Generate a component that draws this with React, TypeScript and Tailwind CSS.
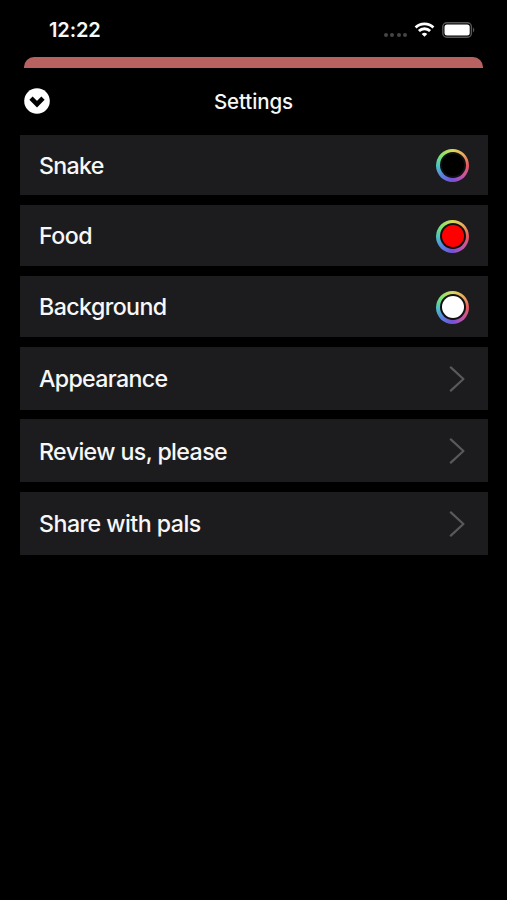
import { ReactNode } from "react";

type Row = {
  label: string;
  color?: string;
  spacing: string;
};

const colorRows: Row[] = [
  { label: "Snake", color: "bg-black", spacing: "tracking-[-0.7px]" },
  { label: "Food", color: "bg-[#fe0000]", spacing: "tracking-[-0.5px]" },
  { label: "Background", color: "bg-white", spacing: "tracking-[-0.58px]" },
];

const linkRows: Row[] = [
  { label: "Appearance", spacing: "tracking-[-0.67px]" },
  { label: "Review us, please", spacing: "tracking-[-0.61px]" },
  { label: "Share with pals", spacing: "tracking-[-0.52px]" },
];

function StatusBar() {
  return (
    <div className="flex h-[57px] items-center justify-between pt-[3px] pr-[32px] pl-[49px]">
      <span className="text-[20px] leading-none font-semibold tracking-[-0.1px]">12:22</span>
      <div className="flex items-center">
        <div className="mt-[9px] mr-[7px] flex gap-[2.4px]">
          {[0, 1, 2, 3].map((dot) => (
            <span key={dot} className="h-[4px] w-[4px] rounded-full bg-[#454547]" />
          ))}
        </div>
        <svg className="mr-[7px] mb-[1px] h-[15px] w-[21px]" viewBox="0 0 20 15" fill="none" stroke="white" strokeWidth="2.8">
          <path d="M1.1 5.5a12.6 12.6 0 0 1 17.8 0" />
          <path d="M4.4 9.1a7.9 7.9 0 0 1 11.2 0" />
          <path d="M10 14.8 7.2 12a4 4 0 0 1 5.6 0Z" fill="white" stroke="none" />
        </svg>
        <svg className="mb-[1px] h-[16px] w-[33px]" viewBox="0 0 33 16" fill="none">
          <rect x="0.8" y="0.8" width="28.6" height="14.4" rx="4" stroke="#58585a" strokeWidth="1.4" />
          <rect x="2.5" y="2.5" width="25.2" height="11" rx="2.5" fill="white" />
          <path d="M31 5.6c1.8.8 1.8 4 0 4.8Z" fill="#58585a" />
        </svg>
      </div>
    </div>
  );
}

function ColorWell({ color }: { color?: string }) {
  return (
    <button
      aria-label="Pick color"
      className="mt-[1px] mr-[19px] flex h-[33px] w-[33px] items-center justify-center rounded-full bg-[conic-gradient(#d8d85c,#eeaa5c_45deg,#e5575f_90deg,#c653a8_135deg,#7650d8_180deg,#5a7fe0_225deg,#4cc5c0_270deg,#80e470_310deg,#d8d85c)]"
    >
      <span className="flex h-[26px] w-[26px] items-center justify-center rounded-full bg-[#101011]">
        <span className={`h-[22px] w-[22px] rounded-full ${color}`} />
      </span>
    </button>
  );
}

function Chevron() {
  return (
    <svg className="mt-[1px] mr-[22px] h-[26px] w-[18px]" viewBox="0 0 18 26" fill="none" stroke="#59595c" strokeWidth="2.2">
      <path d="M2.8 1.4 15.4 13 2.8 24.6" strokeLinecap="round" strokeLinejoin="round" />
    </svg>
  );
}

function SettingsRow({ row, height, children }: { row: Row; height: string; children: ReactNode }) {
  return (
    <div className={`flex items-center justify-between bg-[#1c1c1e] pl-[19px] ${height}`}>
      <span className={`pt-[2.6px] text-[23.2px] leading-none font-[450] ${row.spacing}`}>{row.label}</span>
      {children}
    </div>
  );
}

export default function App() {
  return (
    <div className="h-[900px] w-[507px] overflow-hidden bg-black font-['Inter',sans-serif] text-[#f7f7f7]">
      <StatusBar />
      <div className="mr-[24px] ml-[24.4px] h-[11px] rounded-t-[10px] bg-[#b76160]" />

      <header className="grid h-[66.6px] grid-cols-[1fr_auto_1fr] items-center px-[24px]">
        <button aria-label="Close">
          <svg className="h-[26px] w-[26px]" viewBox="0 0 26 26" fill="none">
            <circle cx="13" cy="13" r="12.8" fill="white" />
            <path d="m7 10.2 6 6 6-6" stroke="black" strokeWidth="4.6" />
          </svg>
        </button>
        <h1 className="pt-[2px] text-[20.5px] leading-none font-medium tracking-[-0.1px]">Settings</h1>
      </header>

      <main className="mr-[19px] ml-[20px]">
        <div className="flex flex-col gap-[10px]">
          {colorRows.map((row) => (
            <SettingsRow key={row.label} row={row} height="h-[60.8px]">
              <ColorWell color={row.color} />
            </SettingsRow>
          ))}
        </div>
        <div className="mt-[10px] flex flex-col gap-[9.4px]">
          {linkRows.map((row) => (
            <SettingsRow key={row.label} row={row} height="h-[63px]">
              <Chevron />
            </SettingsRow>
          ))}
        </div>
      </main>
    </div>
  );
}
